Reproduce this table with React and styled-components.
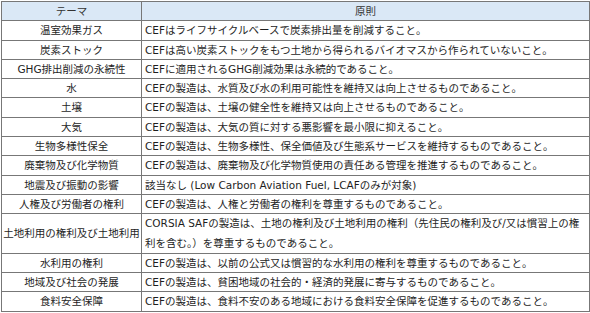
import React from "react";
import styled, { createGlobalStyle } from "styled-components";

const Global = createGlobalStyle`
  html, body { margin: 0; padding: 0; background: #ffffff; }
  body { font-family: "DejaVu Sans", "Noto Sans CJK JP", sans-serif; }
`;

const Table = styled.table`
  border-collapse: collapse;
  margin: 1px 0 0 1px;
  width: 588px;
  table-layout: fixed;
  border: 1px solid #555;
  font-size: 10.5px;
  color: #1e1e1e;
`;

const Col = styled.col`
  width: ${(p) => p.$w}px;
`;

const Th = styled.th`
  background: #dae8f6;
  font-weight: normal;
  color: #333;
  border: 1px solid #777;
  height: 18.3px;
  line-height: 18.3px;
  padding: 0;
  text-align: center;
`;

const Theme = styled.td`
  border: 1px solid #777;
  height: 18.3px;
  line-height: 18.3px;
  padding: 0 1px;
  text-align: center;
  white-space: nowrap;
`;

const Principle = styled.td`
  border: 1px solid #777;
  height: 18.3px;
  line-height: ${(p) => (p.$multi ? "19.3px" : "18.3px")};
  padding: 0 2px 0 3px;
  text-align: left;
`;

const rows = [
  ["温室効果ガス", "CEFはライフサイクルベースで炭素排出量を削減すること。"],
  ["炭素ストック", "CEFは高い炭素ストックをもつ土地から得られるバイオマスから作られていないこと。"],
  ["GHG排出削減の永続性", "CEFに適用されるGHG削減効果は永続的であること。"],
  ["水", "CEFの製造は、水質及び水の利用可能性を維持又は向上させるものであること。"],
  ["土壌", "CEFの製造は、土壌の健全性を維持又は向上させるものであること。"],
  ["大気", "CEFの製造は、大気の質に対する悪影響を最小限に抑えること。"],
  ["生物多様性保全", "CEFの製造は、生物多様性、保全価値及び生態系サービスを維持するものであること。"],
  ["廃棄物及び化学物質", "CEFの製造は、廃棄物及び化学物質使用の責任ある管理を推進するものであること。"],
  ["地震及び振動の影響", "該当なし (Low Carbon Aviation Fuel, LCAFのみが対象)"],
  ["人権及び労働者の権利", "CEFの製造は、人権と労働者の権利を尊重するものであること。"],
  ["土地利用の権利及び土地利用", "CORSIA SAFの製造は、土地の権利及び土地利用の権利（先住民の権利及び/又は慣習上の権利を含む。）を尊重するものであること。", true],
  ["水利用の権利", "CEFの製造は、以前の公式又は慣習的な水利用の権利を尊重するものであること。"],
  ["地域及び社会の発展", "CEFの製造は、貧困地域の社会的・経済的発展に寄与するものであること。"],
  ["食料安全保障", "CEFの製造は、食料不安のある地域における食料安全保障を促進するものであること。"],
];

export default function App() {
  return (
    <>
      <Global />
      <Table>
        <colgroup>
          <Col $w={140} />
          <Col $w={448} />
        </colgroup>
        <thead>
          <tr>
            <Th>テーマ</Th>
            <Th>原則</Th>
          </tr>
        </thead>
        <tbody>
          {rows.map(([t, p, multi]) => (
            <tr key={t}>
              <Theme>{t}</Theme>
              <Principle $multi={multi}>{p}</Principle>
            </tr>
          ))}
        </tbody>
      </Table>
    </>
  );
}
